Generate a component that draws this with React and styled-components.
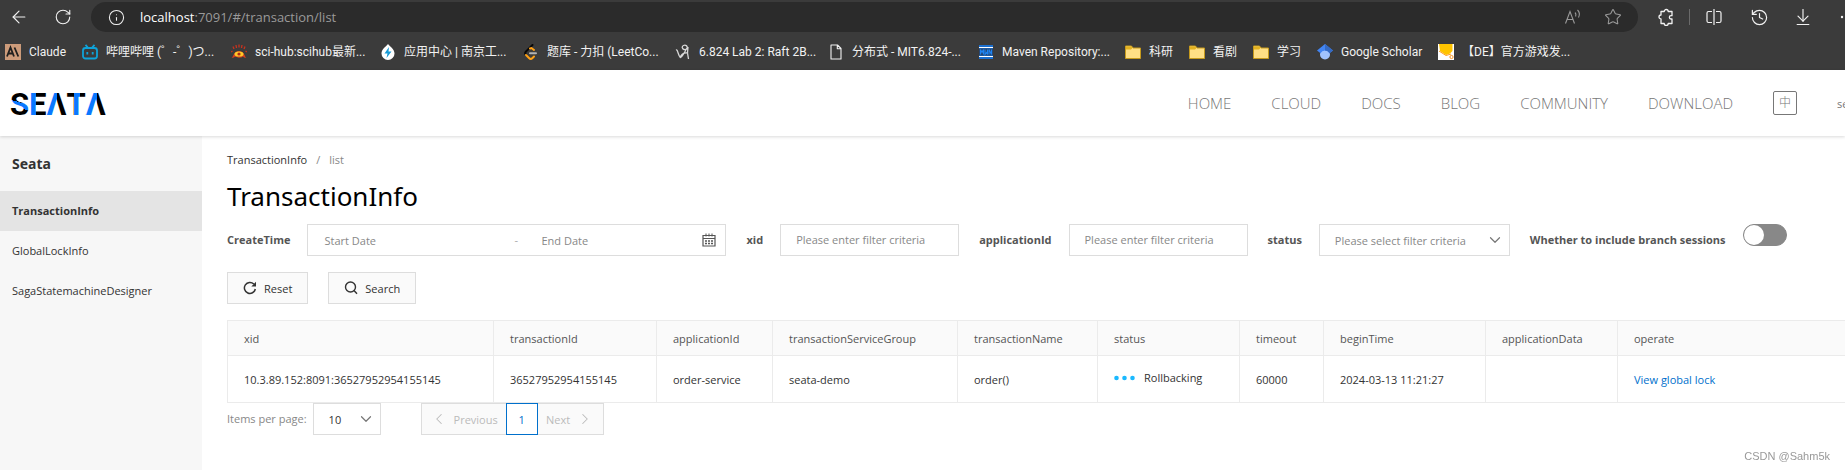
import React, { useState } from "react";
import styled, { createGlobalStyle } from "styled-components";
import {
  ArrowDownToLine,
  ArrowLeft,
  ChevronDown,
  ChevronLeft,
  ChevronRight,
  History,
  Info,
  RotateCw,
  Star,
} from "lucide-react";

const GlobalStyle = createGlobalStyle`
  * {
    box-sizing: border-box;
  }

  body {
    margin: 0;
    overflow-x: hidden;
    background-color: #fff;
    font-family: "Open Sans", "Noto Sans CJK SC", sans-serif;
    font-size: 11px;
    color: #333;
  }

  button, input, select {
    font: inherit;
    color: inherit;
  }
`;

/* browser chrome */

const Chrome = styled.div`
  background-color: #3b3b3b;
  color: #f2f2f2;
`;

const Toolbar = styled.div`
  display: flex;
  align-items: center;
  height: 34px;
  padding-left: 7px;
  margin-right: -14px;
`;

const IconButton = styled.button`
  display: flex;
  flex: none;
  align-items: center;
  justify-content: center;
  width: 24px;
  height: 24px;
  padding: 0;
  margin-right: ${(props) => props.$space || 0}px;
  border: none;
  background: none;
  color: ${(props) => (props.$dim ? "#9a9a9a" : "#f2f2f2")};
`;

const AddressBar = styled.div`
  display: flex;
  flex: 1;
  align-items: center;
  height: 30px;
  padding: 0 13px 0 17px;
  margin-right: 16px;
  border-radius: 15px;
  background-color: #2b2b2b;
`;

const Url = styled.div`
  flex: 1;
  padding-left: 15px;
  font-size: 13px;
  color: #9a9a9a;

  b {
    font-weight: normal;
    color: #fff;
  }
`;

const Divider = styled.div`
  width: 1px;
  height: 16px;
  margin: 0 12px 0 11px;
  background-color: #6a6a6a;
`;

const Bookmarks = styled.div`
  display: flex;
  align-items: center;
  height: 36px;
  padding-left: 5px;
  overflow: hidden;
`;

const Bookmark = styled.a`
  display: flex;
  flex: none;
  align-items: center;
  gap: 8px;
  width: ${(props) => props.$width}px;
  font-family: Roboto, "Noto Sans CJK SC", sans-serif;
  font-size: 12px;
  line-height: 18px;
  white-space: nowrap;
  color: #f2f2f2;
  text-decoration: none;

  svg {
    flex: none;
  }
`;

/* site header */

const Header = styled.header`
  position: relative;
  display: flex;
  align-items: center;
  justify-content: space-between;
  height: 66px;
  padding-left: 10px;
  background-color: #fff;
  box-shadow: 0 1px 3px rgba(0, 0, 0, 0.15);
`;

const LogoText = styled.text`
  font-family: Roboto, sans-serif;
  font-size: 31px;
  font-weight: bold;
`;

const Nav = styled.nav`
  display: flex;
  align-items: center;
  gap: 40px;
`;

const NavLink = styled.a`
  font-size: 15px;
  font-weight: 300;
  line-height: 20px;
  color: #777;
  text-decoration: none;
`;

const LanguageButton = styled.button`
  width: 24px;
  height: 24px;
  padding: 0;
  border: 1px solid #777;
  border-radius: 2px;
  background: none;
  font-size: 12px;
  font-weight: 300;
  line-height: 20px;
  color: #777;
`;

const UserName = styled.span`
  width: 8px;
  white-space: nowrap;
  color: #777;
`;

/* page */

const Body = styled.div`
  display: flex;
  min-height: calc(100vh - 136px);
`;

const Sidebar = styled.aside`
  flex: none;
  width: 202px;
  background-color: #f7f7f7;
`;

const SidebarTitle = styled.div`
  height: 55px;
  padding-left: 12px;
  font-family: "Noto Sans", sans-serif;
  font-size: 14px;
  font-weight: bold;
  line-height: 55px;
`;

const SidebarLink = styled.a`
  display: block;
  height: 40px;
  padding-left: 12px;
  line-height: 40px;
  text-decoration: none;
  color: #333;
  font-weight: ${(props) => (props.$active ? "bold" : "normal")};
  background-color: ${(props) => (props.$active ? "#e4e4e4" : "transparent")};
`;

const Main = styled.main`
  flex: 1;
  min-width: 0;
  padding: 16px 0 0 25px;
`;

const Breadcrumb = styled.div`
  display: flex;
  gap: 9px;
  line-height: 16px;
  color: #888;

  a {
    color: #333;
    text-decoration: none;
  }
`;

const Title = styled.h1`
  margin: 8px 0;
  font-family: "Noto Sans", sans-serif;
  font-size: 26px;
  font-weight: normal;
  line-height: 40px;
  color: #000;
`;

const Filters = styled.form`
  display: flex;
  flex-direction: column;
  gap: 16px;
  margin-bottom: 16px;
`;

const FilterRow = styled.div`
  display: flex;
  flex-wrap: wrap;
  gap: 16px 20px;
`;

const Field = styled.div`
  display: flex;
  gap: 17px;
  line-height: 32px;
`;

const FieldLabel = styled.label`
  font-weight: bold;
  color: #555;
`;

const TextInput = styled.input`
  width: 179px;
  height: 32px;
  padding: 0 15px;
  border: 1px solid #ddd;
  outline: none;

  &::placeholder {
    color: #888;
  }
`;

const RangeBox = styled.div`
  display: flex;
  align-items: center;
  width: 419px;
  height: 32px;
  padding: 0 9px 0 16px;
  border: 1px solid #ddd;
  line-height: 16px;
  color: #aaa;

  input {
    flex: 1;
    min-width: 0;
    height: 20px;
    padding: 0;
    border: none;
    outline: none;
    color: #333;
  }

  input:first-child {
    flex: 0 0 190px;
  }

  span {
    width: 27px;
  }

  input::placeholder {
    color: #888;
  }
`;

const SelectBox = styled.div`
  position: relative;
  width: ${(props) => props.$width}px;

  select {
    display: block;
    width: 100%;
    height: 32px;
    padding: 0 15px;
    appearance: none;
    border: 1px solid #ddd;
    border-radius: 0;
    background-color: #fff;
    color: ${(props) => (props.$empty ? "#888" : "#333")};
  }

  svg {
    position: absolute;
    top: 7px;
    right: 6px;
    color: #777;
    pointer-events: none;
  }
`;

const Switch = styled.input`
  display: flex;
  width: 44px;
  height: 22px;
  margin: 0;
  appearance: none;
  border: 1px solid #888;
  border-radius: 11px;
  background-color: #888;

  &::before {
    content: "";
    width: 20px;
    height: 20px;
    border-radius: 10px;
    background-color: #fff;
  }

  &:checked {
    justify-content: flex-end;
    border-color: #0070cc;
    background-color: #0070cc;
  }
`;

const Button = styled.button`
  display: flex;
  align-items: center;
  gap: 7px;
  height: 32px;
  padding: 0 15px;
  border: 1px solid #ddd;
  background-color: #fafafa;
`;

const Table = styled.table`
  width: 100%;
  border-collapse: collapse;
  table-layout: fixed;

  th,
  td {
    padding: 0 16px;
    border: 1px solid #ebebeb;
    border-right-width: 0;
    text-align: left;
    white-space: nowrap;
  }

  th {
    height: 35px;
    background-color: #fafafa;
    font-weight: normal;
    color: #555;
  }

  td {
    height: 47px;
  }

  a {
    color: #0070cc;
    text-decoration: none;
  }
`;

const Status = styled.div`
  display: flex;
  align-items: center;
  gap: 9px;
  padding-bottom: 3px;
`;

const Footer = styled.div`
  display: flex;
  align-items: center;
`;

const PageSize = styled.div`
  display: flex;
  gap: 6px;
  margin-right: 40px;
  line-height: 32px;
  color: #888;
`;

const PageButton = styled.button`
  display: flex;
  align-items: center;
  justify-content: center;
  gap: 6px;
  width: ${(props) => props.$width}px;
  height: 32px;
  padding: 0;
  border: 1px solid ${(props) => (props.$current ? "#0070cc" : "#ddd")};
  background-color: ${(props) => (props.$current ? "#fff" : "#fafafa")};
  color: ${(props) => (props.$current ? "#0070cc" : "#bbb")};

  &:first-of-type {
    border-right: none;
  }

  &:last-of-type {
    border-left: none;
  }
`;

const Watermark = styled.div`
  position: fixed;
  right: 15px;
  bottom: 6px;
  font-family: "Liberation Sans", Arial, sans-serif;
  line-height: 16px;
  color: #999;
`;

/* icons */

const ReadAloudIcon = () => (
  <svg width="18" height="18" viewBox="0 0 18 18" fill="none" stroke="currentColor" strokeWidth="1.1">
    <path d="M1.5 15.5 6 3.5l4.500 12M3 11.500h6M11 4.500c1 1 1.200 2.500.6 4M13.500 2c2 2 2.300 5 1 7.500" />
  </svg>
);

const ExtensionIcon = () => (
  <svg width="18" height="18" viewBox="0 0 18 18" fill="none" stroke="currentColor" strokeWidth="1.3" strokeLinejoin="round">
    <path d="M4 3.500h3.200a2 2 0 0 1 4 0H15v4.200h-1a1.600 1.600 0 0 0 0 3.300h1v4.500h-3.800a2 2 0 0 1-4 0H4V11a2 2 0 0 1 0-4z" />
  </svg>
);

const SplitIcon = () => (
  <svg width="18" height="18" viewBox="0 0 18 18" fill="none" stroke="currentColor" strokeWidth="1.2">
    <path d="M9 1v16M7 3.500H3.500a1.500 1.500 0 0 0-1.500 1.500v8a1.500 1.500 0 0 0 1.500 1.500H7M11 3.500h3.500A1.500 1.500 0 0 1 16 5v8a1.500 1.500 0 0 1-1.500 1.500H11" />
  </svg>
);

const MoreIcon = () => (
  <svg width="18" height="18" viewBox="0 0 18 18" fill="currentColor">
    <circle cx="4" cy="9" r="1.200" />
    <circle cx="9" cy="9" r="1.200" />
    <circle cx="14" cy="9" r="1.200" />
  </svg>
);

const CalendarIcon = () => (
  <svg width="14" height="14" viewBox="0 0 14 14" fill="none" stroke="#555">
    <path d="M1 2.500h12v10.500H1zM1 5.500h12" strokeWidth="1.200" />
    <path d="M4 .5v3M7 .5v3M10 .5v3" />
    <path d="M3 8h8M3 10.500h8" strokeWidth="1.400" strokeDasharray="2 1" />
  </svg>
);

const ResetIcon = () => (
  <svg width="14" height="14" viewBox="0 0 14 14" fill="none" stroke="#333" strokeWidth="1.500">
    <path d="M12.300 8A5.500 5.500 0 1 1 10.800 3" />
    <path d="M13 .8v4.700H8.300z" fill="#333" stroke="none" />
  </svg>
);

const SearchIcon = () => (
  <svg width="14" height="14" viewBox="0 0 14 14" fill="none" stroke="#333" strokeWidth="1.400">
    <circle cx="6.500" cy="6" r="5" />
    <path d="m10 9.500 3 3.300" />
  </svg>
);

const DotsIcon = () => (
  <svg width="21" height="6" viewBox="0 0 21 6" fill="#1ab9ff">
    <circle cx="2.500" cy="3" r="2.300" />
    <circle cx="10.500" cy="3" r="2.300" />
    <circle cx="18.500" cy="3" r="2.300" />
  </svg>
);

const BookmarkIcon = ({ type }) => (
  <svg width="16" height="16" viewBox="0 0 16 16" fill="none">
    {type === "claude" && (
      <>
        <path d="M0 0h16v16H0z" fill="#cc9b7a" />
        <path d="m2 12.500 3.500-9 3.500 9M3.500 9.500h4M9.500 3.500l3.800 9" stroke="#1f1f1e" strokeWidth="1.800" />
      </>
    )}
    {type === "bili" && (
      <g stroke="#0fa3d9" strokeWidth="1.800">
        <rect x="1" y="4" width="14" height="10.500" rx="2.500" />
        <path d="m3.500.8 2.300 2.700M12.500.8l-2.300 2.700M5.300 8v2.500M10.700 8v2.500" />
      </g>
    )}
    {type === "eye" && (
      <>
        <path d="M3 5 2 2.500M5.500 4 5 1M8 3.500V.5M10.500 4l.5-3M13 5l1-2.500M0 8l1.500-1M16 8l-1.500-1" stroke="#c8321e" strokeWidth="1.300" />
        <path d="M.5 14c2-1 2-7 7.500-7s5.500 6 7.500 7c-2 0-3-1-3.500-1.500-2 1.600-6 1.600-8 0C3.500 13 2.500 14 .5 14z" fill="#d6401f" />
        <ellipse cx="8" cy="10" rx="4.500" ry="2.600" fill="#ffc928" />
        <circle cx="8" cy="10" r="1.600" fill="#b02a16" />
      </>
    )}
    {type === "drop" && (
      <>
        <path d="M8 0c2 2.500 6.500 5 6.500 9.500a6.500 6.500 0 0 1-13 0C1.500 5 6 2.500 8 0z" fill="#fff" />
        <path d="M9 3 4.500 9.500h3L6.500 14 11.500 7.500h-3z" fill="#169bd7" />
      </>
    )}
    {type === "leetcode" && (
      <g strokeWidth="2" strokeLinecap="round">
        <path d="M9.500 1 3 7.500c-1 1-1 2.300 0 3.300" stroke="#080808" />
        <path d="m3 11 3 3c1 1 2.500 1 3.500 0l1.500-1.500M7 4.500 8.500 4l2.500 2" stroke="#ffa116" />
        <path d="M7 9.300h6" stroke="#b3b3b3" />
      </g>
    )}
    {type === "script" && (
      <path d="M1 6c2-1 2 6 4.500 7.500C8 12 9 9 12 4c.8-2-1.500-3.500-3.500-2.500S7 5 9 5.500s4-.8 4-2.500l-.5 6 1 6M5 14c1-4 4-5.500 8-5" stroke="#d8d8d8" strokeWidth="1.300" />
    )}
    {type === "file" && (
      <path d="M3 1h6.500L13 4.500V15H3zM9.300 1v3.800H13" stroke="#f2f2f2" strokeWidth="1.100" strokeLinejoin="round" />
    )}
    {type === "maven" && (
      <>
        <path d="M1 1h14v14H1z" fill="#1b6fd0" />
        <path d="M1 3.500h14M1 12.500h14" stroke="#fff" />
        <path d="M1 4.500h14v7H1z" fill="#27466f" />
        <path d="M2.500 10.500v-5l1.500 3 1.500-3v5M7 5.500v5l1.500-2 1 2v-5M11 10.500v-5l2.500 5v-5" stroke="#1d83f2" strokeWidth="1.100" />
      </>
    )}
    {type === "folder" && (
      <>
        <path d="M.5 2h6L8 4h7.500v10.500H.5z" fill="#ffdf85" stroke="#c69a1c" strokeLinejoin="round" />
        <path d="M1 2.500h5.200L7.500 4 6 5.500H1z" fill="#e3b11f" />
      </>
    )}
    {type === "scholar" && (
      <>
        <circle cx="8" cy="10.500" r="5" fill="#a0c3ff" />
        <path d="M8 0 0 6.500 3.500 9.300a5 5 0 0 1 9 0L16 6.500z" fill="#4285f4" />
        <path d="M8 0v6.500c2 0 3.700 1.100 4.500 2.800L16 6.500z" fill="#356ac3" />
      </>
    )}
    {type === "game" && (
      <>
        <path d="M0 0h16v16H0z" fill="#fff" />
        <path d="M1 0h13.500v7L12 9.500 8 11 2 7z" fill="#ffc400" />
        <path d="m1 7 7 4.500 5-1.500" stroke="#ff9d1c" />
        <circle cx="13.500" cy="13" r="1.600" stroke="#f7931e" />
      </>
    )}
  </svg>
);

const BLUE = "#0a78ff";

// x positions where the word turns blue and back to black
const blueBands = [
  [19, 26],
  [36, 47],
  [64, 70],
  [76, 87],
];

const Logo = () => (
  <svg width="100" height="42" viewBox="0 0 100 42" role="img" aria-label="SEATA">
    <defs>
      <linearGradient id="logo-s" gradientUnits="userSpaceOnUse" x1="12" y1="12" x2="6" y2="34">
        <stop offset="0.38" stopColor="#000" />
        <stop offset="0.38" stopColor={BLUE} />
        <stop offset="0.62" stopColor={BLUE} />
        <stop offset="0.62" stopColor="#000" />
      </linearGradient>
      <linearGradient id="logo-rest" gradientUnits="userSpaceOnUse" x1="0" y1="0" x2="100" y2="0">
        {blueBands.map(([from, to]) => (
          <React.Fragment key={from}>
            <stop offset={from / 100} stopColor="#000" />
            <stop offset={from / 100} stopColor={BLUE} />
            <stop offset={to / 100} stopColor={BLUE} />
            <stop offset={to / 100} stopColor="#000" />
          </React.Fragment>
        ))}
      </linearGradient>
    </defs>
    <LogoText x="0" y="33" fill="url(#logo-rest)">
      <tspan fill="url(#logo-s)">S</tspan>EΛTΛ
    </LogoText>
  </svg>
);

const bookmarks = [
  { icon: "claude", label: "Claude", width: 77 },
  { icon: "bili", label: "哔哩哔哩 (゜-゜)つ...", width: 149 },
  { icon: "eye", label: "sci-hub:scihub最新...", width: 149 },
  { icon: "drop", label: "应用中心 | 南京工...", width: 143 },
  { icon: "leetcode", label: "题库 - 力扣 (LeetCo...", width: 152 },
  { icon: "script", label: "6.824 Lab 2: Raft 2B...", width: 153 },
  { icon: "file", label: "分布式 - MIT6.824-...", width: 150 },
  { icon: "maven", label: "Maven Repository:...", width: 147 },
  { icon: "folder", label: "科研", width: 64 },
  { icon: "folder", label: "看剧", width: 64 },
  { icon: "folder", label: "学习", width: 64 },
  { icon: "scholar", label: "Google Scholar", width: 121 },
  { icon: "game", label: "【DE】官方游戏发...", width: 140 },
];

const navLinks = ["HOME", "CLOUD", "DOCS", "BLOG", "COMMUNITY", "DOWNLOAD"];

const menu = ["TransactionInfo", "GlobalLockInfo", "SagaStatemachineDesigner"];

const columns = [
  { name: "xid", width: 266 },
  { name: "transactionId", width: 163 },
  { name: "applicationId", width: 116 },
  { name: "transactionServiceGroup", width: 185 },
  { name: "transactionName", width: 140 },
  { name: "status", width: 142 },
  { name: "timeout", width: 84 },
  { name: "beginTime", width: 162 },
  { name: "applicationData", width: 132 },
  { name: "operate" },
];

const App = () => {
  const [branch, setBranch] = useState(false);
  const [status, setStatus] = useState("");

  return (
    <>
      <GlobalStyle />
      <Chrome>
        <Toolbar>
          <IconButton aria-label="Back" $space={20}>
            <ArrowLeft size={20} strokeWidth={1.4} />
          </IconButton>
          <IconButton aria-label="Refresh" $space={16}>
            <RotateCw size={18} strokeWidth={1.5} />
          </IconButton>
          <AddressBar>
            <Info size={17} strokeWidth={1.5} />
            <Url>
              <b>localhost</b>:7091/#/transaction/list
            </Url>
            <IconButton aria-label="Read aloud" $dim $space={16}>
              <ReadAloudIcon />
            </IconButton>
            <IconButton aria-label="Favorite" $dim>
              <Star size={18} strokeWidth={1.4} />
            </IconButton>
          </AddressBar>
          <IconButton aria-label="Extensions">
            <ExtensionIcon />
          </IconButton>
          <Divider />
          <IconButton aria-label="Split screen" $space={21}>
            <SplitIcon />
          </IconButton>
          <IconButton aria-label="History" $space={20}>
            <History size={19} strokeWidth={1.5} />
          </IconButton>
          <IconButton aria-label="Downloads" $space={20}>
            <ArrowDownToLine size={20} strokeWidth={1.4} />
          </IconButton>
          <IconButton aria-label="More">
            <MoreIcon />
          </IconButton>
        </Toolbar>
        <Bookmarks>
          {bookmarks.map((item) => (
            <Bookmark key={item.label} href="#" $width={item.width}>
              <BookmarkIcon type={item.icon} />
              {item.label}
            </Bookmark>
          ))}
        </Bookmarks>
      </Chrome>

      <Header>
        <Logo />
        <Nav>
          {navLinks.map((link) => (
            <NavLink key={link} href="#">
              {link}
            </NavLink>
          ))}
          <LanguageButton>中</LanguageButton>
          <UserName>se</UserName>
        </Nav>
      </Header>

      <Body>
        <Sidebar>
          <SidebarTitle>Seata</SidebarTitle>
          {menu.map((item, i) => (
            <SidebarLink key={item} href="#" $active={i === 0}>
              {item}
            </SidebarLink>
          ))}
        </Sidebar>
        <Main>
          <Breadcrumb>
            <a href="#">TransactionInfo</a>
            <span>/</span>
            <span>list</span>
          </Breadcrumb>
          <Title>TransactionInfo</Title>

          <Filters onSubmit={(e) => e.preventDefault()}>
            <FilterRow>
              <Field>
                <FieldLabel htmlFor="start">CreateTime</FieldLabel>
                <RangeBox>
                  <input id="start" placeholder="Start Date" />
                  <span>-</span>
                  <input aria-label="End Date" placeholder="End Date" />
                  <CalendarIcon />
                </RangeBox>
              </Field>
              <Field>
                <FieldLabel htmlFor="xid">xid</FieldLabel>
                <TextInput id="xid" placeholder="Please enter filter criteria" />
              </Field>
              <Field>
                <FieldLabel htmlFor="applicationId">applicationId</FieldLabel>
                <TextInput id="applicationId" placeholder="Please enter filter criteria" />
              </Field>
              <Field>
                <FieldLabel htmlFor="status">status</FieldLabel>
                <SelectBox $width={191} $empty={!status}>
                  <select id="status" value={status} onChange={(e) => setStatus(e.target.value)}>
                    <option value="">Please select filter criteria</option>
                    <option value="Rollbacking">Rollbacking</option>
                  </select>
                  <ChevronDown size={18} strokeWidth={1.6} />
                </SelectBox>
              </Field>
              <Field>
                <FieldLabel htmlFor="branch">Whether to include branch sessions</FieldLabel>
                <Switch
                  id="branch"
                  type="checkbox"
                  checked={branch}
                  onChange={(e) => setBranch(e.target.checked)}
                />
              </Field>
            </FilterRow>
            <FilterRow>
              <Button type="reset">
                <ResetIcon />
                Reset
              </Button>
              <Button type="submit">
                <SearchIcon />
                Search
              </Button>
            </FilterRow>
          </Filters>

          <Table>
            <colgroup>
              {columns.map((column) => (
                <col key={column.name} width={column.width} />
              ))}
            </colgroup>
            <thead>
              <tr>
                {columns.map((column) => (
                  <th key={column.name}>{column.name}</th>
                ))}
              </tr>
            </thead>
            <tbody>
              <tr>
                <td>10.3.89.152:8091:36527952954155145</td>
                <td>36527952954155145</td>
                <td>order-service</td>
                <td>seata-demo</td>
                <td>order()</td>
                <td>
                  <Status>
                    <DotsIcon />
                    Rollbacking
                  </Status>
                </td>
                <td>60000</td>
                <td>2024-03-13 11:21:27</td>
                <td></td>
                <td>
                  <a href="#">View global lock</a>
                </td>
              </tr>
            </tbody>
          </Table>

          <Footer>
            <PageSize>
              <label htmlFor="size">Items per page:</label>
              <SelectBox $width={68}>
                <select id="size" defaultValue="10">
                  <option>10</option>
                  <option>20</option>
                </select>
                <ChevronDown size={18} strokeWidth={1.6} />
              </SelectBox>
            </PageSize>
            <PageButton $width={85} disabled>
              <ChevronLeft size={18} strokeWidth={1.4} />
              Previous
            </PageButton>
            <PageButton $width={32} $current>
              1
            </PageButton>
            <PageButton $width={66} disabled>
              Next
              <ChevronRight size={18} strokeWidth={1.4} />
            </PageButton>
          </Footer>
        </Main>
      </Body>
      <Watermark>CSDN @Sahm5k</Watermark>
    </>
  );
};

export default App;
